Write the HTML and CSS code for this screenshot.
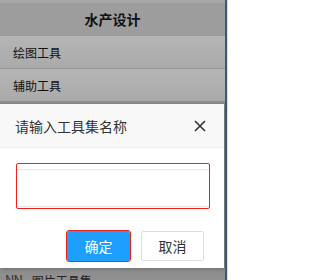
FILE: index.html
```html
<!DOCTYPE html>
<html lang="zh">
<head>
<meta charset="utf-8">
<link rel="stylesheet" href="styles.css">
</head>
<body>
<div class="screen">
  <div class="app">
    <div class="topstrip"></div>
    <div class="title-bar">水产设计</div>
    <div class="row">绘图工具</div>
    <div class="row">辅助工具</div>
    <div class="backdrop">
      <div class="peek"><span class="peek-icon">NN</span><span class="peek-text">图片工具集</span></div>
    </div>
    <div class="dialog">
      <div class="dialog-head">
        <span class="dialog-title">请输入工具集名称</span>
        <svg class="close" width="12" height="12" viewBox="0 0 12 12"><path d="M1 1 L11 11 M11 1 L1 11" stroke="#333" stroke-width="1.6" fill="none"/></svg>
      </div>
      <div class="dialog-body">
        <div class="field"><input class="field-input" type="text"></div>
      </div>
      <div class="dialog-btns">
        <button class="btn btn-primary">确定</button>
        <button class="btn btn-default">取消</button>
      </div>
    </div>
  </div>
  <div class="frame"></div>
  <div class="frame-edge"></div>
</div>
</body>
</html>
```
FILE: styles.css
```css
html, body {
  margin: 0;
  padding: 0;
}
body {
  width: 228px;
  height: 280px;
  overflow: hidden;
  font-family: "Noto Sans CJK SC", "Microsoft YaHei", sans-serif;
}
.screen {
  display: flex;
  width: 228px;
  height: 280px;
}
.app {
  position: relative;
  width: 225px;
  height: 280px;
  display: flex;
  flex-direction: column;
  overflow: hidden;
}
.frame {
  width: 2px;
  background: #3b5878;
}
.frame-edge {
  width: 1px;
  background: #d8dee6;
}
.topstrip {
  height: 3px;
  background: #a7a7a7;
}
.title-bar {
  height: 32px;
  background: #9d9d9d;
  display: flex;
  align-items: center;
  justify-content: center;
  font-size: 14px;
  font-weight: bold;
  color: #111;
}
.row {
  height: 32px;
  display: flex;
  align-items: center;
  padding-left: 13px;
  font-size: 12px;
  color: #111;
  background: linear-gradient(#b5b5b5, #aaaaaa);
  border-top: 1px solid #9a9a9a;
}
.row + .row {
  border-top: 1px solid #999;
}
.backdrop {
  flex: 1;
  background: #8f8f8f;
  display: flex;
  flex-direction: column;
  justify-content: flex-end;
}
.peek {
  height: 10px;
  overflow: hidden;
  display: flex;
  align-items: flex-start;
  padding-left: 5px;
  gap: 10px;
  font-size: 12px;
  line-height: 16px;
  color: #222;
}
.peek-icon {
  margin-top: 2px;
  color: #333;
  font-size: 13px;
  letter-spacing: -1px;
}
.peek-text {
  margin-top: 3px;
}
.dialog {
  position: absolute;
  left: 0;
  top: 104px;
  width: 224px;
  height: 164px;
  background: #fff;
  box-shadow: 1px 1px 4px rgba(0,0,0,0.25);
  display: flex;
  flex-direction: column;
}
.dialog-head {
  height: 43px;
  background: #f8f8f8;
  border-bottom: 1px solid #eee;
  display: flex;
  align-items: center;
  justify-content: space-between;
  padding: 0 18px 0 15px;
}
.dialog-title {
  font-size: 14px;
  color: #333;
}
.close {
  display: block;
}
.dialog-body {
  padding: 15px 14px 0 16px;
}
.field {
  height: 43px;
  border: 1px solid #f0201a;
  border-radius: 2px;
  display: flex;
  align-items: flex-end;
  padding-bottom: 1px;
}
.field-input {
  display: block;
  width: 100%;
  height: 38px;
  box-sizing: border-box;
  border: none;
  border-top: 1px solid #e6e6e6;
  border-bottom: 1px solid #e6e6e6;
  margin: 0;
  padding: 0 8px;
  outline: none;
  background: #fff;
}
.dialog-btns {
  display: flex;
  justify-content: flex-end;
  gap: 11px;
  padding: 22px 20px 0 0;
}
.btn {
  height: 30px;
  width: 63px;
  box-sizing: border-box;
  font-family: "Noto Sans CJK SC", "Microsoft YaHei", sans-serif;
  font-size: 14px;
  border-radius: 2px;
  padding: 0;
  cursor: pointer;
}
.btn-primary {
  background: #1e9fff;
  color: #fff;
  border: 1px solid #1e9fff;
  outline: 1px solid #f0201a;
  outline-offset: 0;
  width: 63px;
}
.btn-default {
  background: #fff;
  color: #333;
  border: 1px solid #dedede;
}
```
